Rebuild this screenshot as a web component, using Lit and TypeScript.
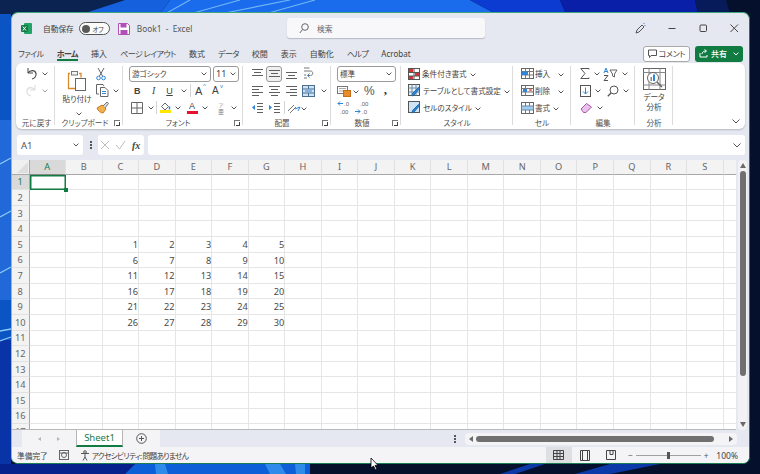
import { LitElement, html, css, svg } from "lit";
import { customElement } from "lit/decorators.js";

const BLUE = "#2f86d6";
const GREY = "#5f5f5f";

// thin wrapper so every ribbon icon is drawn on the same kind of box
const ico = (w: number, h: number, body: unknown) => html`<svg class="ico" width=${w} height=${h} viewBox="0 0 ${w} ${h}" fill="none" stroke=${GREY} stroke-width="1">${body}</svg>`;

const lines = (rows: [number, number, number][], color = GREY) =>
  rows.map(([x1, x2, y]) => svg`<path d="M${x1} ${y + 0.5}H${x2}" stroke=${color}/>`);

const caret = html`<svg class="caret" width="6" height="4" viewBox="0 0 6 4" fill="none" stroke="#555"><path d="M.6.6 3 3l2.4-2.4"/></svg>`;

const icons = {
  undo: ico(13, 13, svg`<path d="M3 1v5h5" stroke="#444"/><path d="M3 6c2-3 7-3.5 8 .5.6 2.6-1.4 5-4 5.5" stroke="#444" stroke-width="1.1"/>`),
  redo: ico(13, 13, svg`<path d="M10 1v5H5" stroke="#bdbdbd"/><path d="M10 6C8 3 3 2.5 2 6.5 1.4 9.100 3.4 11.5 6 12" stroke="#bdbdbd" stroke-width="1.1"/>`),
  paste: ico(20, 23, svg`<path d="M3 4.5H1.5v15H8M12 4.5h2v4" stroke="#d98a2b" stroke-width="1.3"/><rect x="4.5" y="2.5" width="6" height="3.5" fill="#f4f4f4" stroke="#777"/><rect x="8.5" y="9.5" width="10" height="12" fill="#fff" stroke="#666"/>`),
  cut: ico(10, 14, svg`<path d="M2 1l4.5 8M8 1 3.5 9" stroke="#666"/><circle cx="2.5" cy="11" r="1.8" stroke=${BLUE}/><circle cx="7.5" cy="11" r="1.8" stroke=${BLUE}/>`),
  copy: ico(13, 13, svg`<path d="M3 10H.5V.5H7L8 2" stroke="#666"/><path d="M4.5 3.5H9l3 3v6H4.5z" fill="#fff" stroke="#666"/><path d="M6 7.5h4M6 9.5h4" stroke=${BLUE}/>`),
  painter: ico(13, 13, svg`<path d="M1 7l5-3 4 4-3 4c-2 0-5-2-6-5z" fill="#f4b04e" stroke="#c77a1c"/><path d="M7 5l4-4 1.5 1.5L9 7" fill="#d9d9d9" stroke="#777"/>`),
  borders: ico(12, 12, svg`<path d="M.5.5h11v11H.5zM6 .5v11M.5 6h11" stroke="#666"/>`),
  fill: html`<span class="colored"><svg width="11" height="8" viewBox="0 0 11 8" fill="none"><path d="M1.5 4.5 5 1l3.5 3.5L5 8z" stroke="#666"/><path d="M9.5 4.5v3" stroke=${BLUE} stroke-width="1.5"/></svg><i style="background:#ffe600"></i></span>`,
  ruby: html`<span class="ruby"><small>ア</small><b>亜</b></span>`,
  wrap: ico(12, 13, svg`<path d="M2 1h5.5M2 4h6.5c3 0 3 4.5 0 4.5H6" stroke="#777"/><path d="M7.5 6.5 5.5 8.5l2 2" stroke=${BLUE}/><path d="M2 8h2M2 11h3" stroke="#777"/>`),
  merge: ico(13, 12, svg`<rect x=".5" y=".5" width="12" height="11" fill="#cfe3f6" stroke="#4a6f8f"/><path d="M.5 4h12M.5 8h12M6.5 .5V4M6.5 8v3.5" stroke="#4a6f8f"/><path d="M3 6h7" stroke=${BLUE}/>`),
  orient: ico(14, 12, svg`<path d="M1 9l6-6M3 11l6-6" stroke="#777"/><path d="M8 7l5-2-2 4" stroke=${BLUE}/>`),
  currency: html`<svg class="ico" width="14" height="12" viewBox="0 0 14 12" fill="none"><rect x=".5" y="1.5" width="10" height="7" stroke="#777"/><path d="M2 3.500h7M2 6h7" stroke="#aaa"/><rect x="6.5" y="5.500" width="7" height="6" fill="#e98b2a" stroke="#c46f16"/></svg>`,
  incDec: html`<svg class="ico" width="16" height="15" viewBox="0 0 16 15" fill="none"><path d="M6 3.500H1M3 1.500l-2 2 2 2" stroke=${BLUE}/><text x="7" y="6" class="dec">.0</text><text x="3" y="14" class="dec">.00</text></svg>`,
  decDec: html`<svg class="ico" width="16" height="15" viewBox="0 0 16 15" fill="none"><text x="6" y="6" class="dec">.00</text><path d="M1 11.500h5M4 9.500l2 2-2 2" stroke=${BLUE}/><text x="8" y="14" class="dec">.0</text></svg>`,
  condFmt: ico(12, 12, svg`<rect x=".5" y=".5" width="11" height="11" fill="#fff" stroke="#555"/><path d="M1 1h4v3H1z" fill="#d13438" stroke="none"/><path d="M7 5h4v3H7z" fill="#d13438" stroke="none"/><path d="M1 8h4v3H1z" fill="#d13438" stroke="none"/><path d="M.5 4.5h11M.5 8h11M6 .5v11" stroke="#555"/>`),
  tableFmt: ico(13, 13, svg`<rect x=".5" y=".5" width="11" height="11" fill="#e7f0f9" stroke="#555"/><path d="M.5 4h11M.5 8h11M4 .5v11M8 .5v11" stroke="#6f8aa3"/><path d="M12 4 6 11l-2 1 .5-2.5 6-6z" fill=${BLUE} stroke="#1f6cb0"/>`),
  cellStyle: ico(13, 13, svg`<rect x=".5" y=".5" width="11" height="11" fill="#cfe3f6" stroke="#555"/><path d="M12 4 6 11l-2 1 .5-2.5 6-6z" fill=${BLUE} stroke="#1f6cb0"/>`),
  insert: ico(13, 11, svg`<rect x=".5" y=".5" width="12" height="10" stroke="#666"/><path d="M.5 3.5h12M.5 7h12M4.5 .5v10M8.5 .5v10" stroke="#777"/><path d="M1 3.5h6V7H1z" fill=${BLUE} stroke="none"/>`),
  del: ico(13, 11, svg`<rect x=".5" y=".5" width="12" height="10" stroke="#666"/><path d="M.5 3.5h12M.5 7h12M4.5 .5v10" stroke="#777"/><path d="M2 4h4v3H2z" fill=${BLUE} stroke="none"/><path d="M8 3.5l3 3M11 3.5l-3 3" stroke="#d13438"/>`),
  format: ico(13, 12, svg`<rect x=".5" y=".5" width="12" height="11" stroke="#666"/><path d="M4.5 .5v11M8.5 .5v11" stroke="#777"/><path d="M.5 4h12v4H.5z" fill="#a6cdee" stroke="#5f87a8"/>`),
  sigma: ico(10, 11, svg`<path d="M9 1.5V.5H.8L5 5.500.8 10.5H9V9.5" stroke="#555"/>`),
  sort: ico(15, 14, svg`<path d="M1 6 3 1l2 5M1.8 4.5h2.4" stroke=${BLUE}/><path d="M1 8.5h4l-4 5h4" stroke="#555"/><path d="M7 3h7L11.5 7v3L9.500 9V7z" stroke="#666"/>`),
  fillDown: ico(11, 12, svg`<rect x=".5" y=".5" width="10" height="11" stroke="#555"/><path d="M5.5 2.5v6M3 6.5l2.5 2.5L8 6.5" stroke=${BLUE}/>`),
  find: ico(12, 12, svg`<circle cx="7" cy="5" r="4" stroke="#555"/><path d="M4 8 .8 11.3" stroke="#555" stroke-width="1.3"/>`),
  clear: ico(13, 12, svg`<path d="M1 7l5.500-5.500L11.500 5 6 10.500H3.500z" fill="#e7c3e8" stroke="#b14fb5"/>`),
  analyze: html`<svg width="23" height="22" viewBox="0 0 23 22" fill="none" stroke="#666"><rect x=".5" y=".5" width="22" height="21"/><path d="M.5 4.5h22M.5 17h22M6 .5v21M17 .5v21" stroke="#888"/><circle cx="10" cy="10" r="5.500" fill="#fff"/><path d="M7.500 9H9v4H7.500z" fill="#888" stroke="none"/><path d="M10 6.500h2V13h-2z" fill=${BLUE} stroke="none"/><path d="M14 14l5 5" stroke-width="1.5"/></svg>`,
};

@customElement("app-root")
export class AppRoot extends LitElement {
  static styles = css`
    :host { display: block; width: 760px; height: 474px; overflow: hidden; position: relative; font-family: "Noto Sans CJK JP", "Noto Sans", sans-serif; font-feature-settings: "palt"; color: #424242; font-size: 7.7px; background: #06122e; padding: 12px 10px 10px 11px; box-sizing: border-box; }
    .wall { position: absolute; inset: 0; }
    .win { position: relative; width: 739px; height: 452px; background: #e5e8f0; border-top: 1px solid #3fa57b; border-right: 1px solid #1a7d54; border-bottom: 1px solid #1a7d54; border-left: 1px solid #7fc6a5; border-radius: 7px; box-sizing: border-box; display: flex; flex-direction: column; overflow: hidden; }

    .title { height: 31px; display: flex; align-items: center; padding-left: 9px; flex: none; position: relative; }
    .logo { width: 11px; height: 11px; margin-right: 11px; }
    .toggle { height: 11px; border: 1px solid #555; border-radius: 7px; margin: 0 8px 0 5px; display: flex; align-items: center; justify-content: space-between; padding: 0 5px 0 2px; box-sizing: content-box; background: #fbfbfb; width: 22px; font-size: 6.5px; }
    .toggle b { width: 8px; height: 8px; border-radius: 50%; background: #5a5a5a; }
    .save { margin-right: 7px; }
    .book { font-family: "Noto Sans", sans-serif; font-size: 8.3px; color: #555; }
    .search { position: absolute; left: 275px; top: 5px; width: 198px; height: 20px; background: #f8f8fa; border-radius: 3px; box-shadow: 0 1px 1px #b8bbc2; display: flex; align-items: center; gap: 8px; padding-left: 12px; box-sizing: border-box; color: #666; }
    .wincontrols { margin-left: auto; display: flex; align-items: center; gap: 20px; padding-right: 9px; }

    .tabs { height: 19px; display: flex; align-items: center; gap: 13px; padding-left: 6px; flex: none; position: relative; white-space: nowrap; font-size: 8px; }
    .tabs .kana { letter-spacing: -0.5px; }
    .tabs .on { font-weight: 700; position: relative; }
    .tabs .on::after { content: ""; position: absolute; left: 0; right: 0; bottom: -2px; height: 2px; background: #107c41; }
    .tabright { margin-left: auto; display: flex; gap: 5px; padding-right: 6px; }
    .comment { width: 47px; height: 16px; background: #fff; border: 1px solid #a9a9a9; border-radius: 3px; display: flex; align-items: center; justify-content: center; gap: 2px; box-sizing: border-box; letter-spacing: -0.3px; }
    .share { width: 48px; height: 16px; background: #107c41; color: #fff; border-radius: 3px; display: flex; align-items: center; padding: 0 4px; gap: 3px; box-sizing: border-box; font-weight: 500; }
    .share .caret { margin-left: auto; }
    .share .caret path { stroke: #fff; }

    .ribbon { margin: 0 4px; height: 66px; background: #fff; border-radius: 6px; box-shadow: 0 1px 2px #b4b7be; display: flex; flex: none; position: relative; font-size: 7.6px; }
    .grp { display: flex; flex-direction: column; align-items: stretch; position: relative; box-sizing: border-box; }
    .grp::after { content: ""; position: absolute; right: 0; top: 3px; bottom: 4px; width: 1px; background: #dcdcdc; }
    .body { height: 52px; margin-top: 2px; display: flex; flex: none; box-sizing: border-box; }
    .cap { height: 12px; line-height: 12px; text-align: center; position: relative; color: #505050; }
    .launch { position: absolute; right: 3px; top: 3px; width: 5px; height: 5px; border-left: 1px solid #777; border-top: 1px solid #777; }
    .launch::after { content: ""; position: absolute; right: 0; bottom: 0; width: 3px; height: 3px; border-right: 1px solid #444; border-bottom: 1px solid #444; }
    .col { display: flex; flex-direction: column; }
    .row { height: 17px; display: flex; align-items: center; white-space: nowrap; }
    .caret { flex: none; margin-left: 4px; }
    .ico { flex: none; display: block; }
    .dec { font: 6px "Liberation Sans", sans-serif; fill: #666; }
    .vsep { width: 1px; height: 13px; background: #d4d4d4; flex: none; }
    .slot { width: 16.5px; display: flex; justify-content: center; flex: none; align-items: center; }
    .big { display: flex; flex-direction: column; align-items: center; }
    .sel { border: 1px solid #9b9b9b; background: #fff; border-radius: 3px; height: 16px; display: flex; align-items: center; justify-content: space-between; box-sizing: border-box; padding: 0 3px 0 2px; flex: none; }
    .fmt { font-weight: 700; font-family: "Liberation Sans", sans-serif; font-size: 9px; color: #444; }
    .fmti { font-style: italic; font-family: "Liberation Serif", serif; font-size: 10px; }
    .fmtu { text-decoration: underline; font-family: "Liberation Sans", sans-serif; font-size: 9px; }
    .growA { font-family: "Liberation Sans", sans-serif; font-size: 11px; position: relative; }
    .growA sup { position: absolute; left: 8px; top: -2px; font-size: 6px; color: #2f86d6; }
    .colored { display: inline-flex; flex-direction: column; width: 11px; align-items: center; gap: 0; line-height: 8px; }
    .colored i { display: block; width: 11px; height: 3px; }
    .ruby { display: inline-flex; flex-direction: column; align-items: center; font-size: 6px; line-height: 7px; color: #888; }
    .ruby small { font-size: 5px; }
    .ruby b { font-weight: 400; }
    .palign { height: 16px; width: 16px; display: flex; align-items: center; justify-content: center; box-sizing: border-box; }
    .palign.on { background: #f0f0f0; border: 1px solid #9a9a9a; border-radius: 3px; }
    .pct { font-size: 12px; font-family: "Liberation Sans", sans-serif; color: #555; }
    .comma { font-size: 13px; font-family: "Liberation Serif", serif; font-weight: 700; color: #333; line-height: 9px; height: 12px; }

    .fbar { height: 20px; margin: 6px 4px 0 5px; display: flex; flex: none; align-items: stretch; }
    .namebox { width: 66px; background: #fff; border-radius: 3px; display: flex; align-items: center; justify-content: space-between; padding: 0 4px; box-sizing: border-box; font-family: "Noto Sans", sans-serif; font-size: 9.5px; color: #555; }
    .dots { width: 15px; display: flex; flex-direction: column; align-items: center; justify-content: center; gap: 1px; }
    .dots i { width: 2px; height: 2px; background: #555; display: block; }
    .fx { width: 46px; background: #fff; border-radius: 3px; display: flex; align-items: center; gap: 5px; padding: 0 3px 0 2px; box-sizing: border-box; margin-right: 4px; }
    .fx em { font-family: "Liberation Serif", serif; font-weight: 700; font-size: 10px; color: #444; margin-left: 1px; }
    .finput { flex: 1; background: #fff; border-radius: 3px; display: flex; align-items: center; justify-content: flex-end; padding-right: 4px; }

    .sheetwrap { flex: 1; margin-top: 5px; display: flex; min-height: 0; }
    .sheet { width: 724px; overflow: hidden; background: #fff; display: grid; grid-template-columns: 17.5px repeat(20, 36.54px); grid-auto-rows: 15.62px; grid-template-rows: 14.5px; align-content: start; font-family: "Noto Sans", sans-serif; font-size: 9.2px; color: #4a4a4a; border-bottom: 1px solid #b9b9b9; }
    .hd { background: #f3f3f3; display: flex; align-items: center; justify-content: center; color: #666; box-sizing: border-box; border-right: 1px solid #e1e1e1; border-bottom: 1px solid #a8a8a8; }
    .rh { background: #f3f3f3; display: flex; align-items: center; justify-content: center; color: #666; box-sizing: border-box; border-right: 1px solid #a8a8a8; border-bottom: 1px solid #e1e1e1; }
    .hd.on { background: #d9d9d9; color: #1b7a4c; border-bottom-color: #888; }
    .rh.on { background: #d9d9d9; color: #1b7a4c; }
    .corner { background: #f0f0f0; position: relative; border-right: 1px solid #a8a8a8; border-bottom: 1px solid #a8a8a8; box-sizing: border-box; }
    .corner::after { content: ""; position: absolute; right: 1px; bottom: 1px; border-left: 11px solid transparent; border-bottom: 11px solid #dedede; }
    .cell { border-right: 1px solid #e6e6e6; border-bottom: 1px solid #e6e6e6; box-sizing: border-box; text-align: right; padding-right: 0; line-height: 15px; position: relative; }
    .cur { box-shadow: inset 0 0 0 1.5px #107c41; border: 0; }
    .cur::after { content: ""; position: absolute; right: -2px; bottom: -2px; width: 4px; height: 4px; background: #107c41; border: 0; z-index: 1; }
    .vs { flex: 1; background: #f2f2f4; display: flex; flex-direction: column; align-items: center; padding-top: 3px; border-radius: 4px; margin: 0 2px; }
    .thumb { width: 6px; height: 205px; background: #6f6f6f; border-radius: 3px; margin-top: 3px; }
    .arrow-up { border: 3.5px solid transparent; border-top: 0; border-bottom: 5px solid #6a6a6a; }
    .arrow-down { border: 3.5px solid transparent; border-bottom: 0; border-top: 5px solid #6a6a6a; margin-top: auto; margin-bottom: 3px; }

    .tabstrip { height: 17px; display: flex; align-items: stretch; flex: none; position: relative; }
    .nav { width: 54px; margin-left: 10px; background: #f4f4f6; display: flex; align-items: center; justify-content: space-around; padding: 0 8px; box-sizing: border-box; }
    .nav i { border: 2.5px solid transparent; border-right: 3px solid #b5b5b5; border-left: 0; }
    .nav i.r { border-right: 0; border-left: 3px solid #b5b5b5; }
    .sheettab { width: 47px; background: #fff; text-align: center; color: #1b7a4c; font-family: "Noto Sans", sans-serif; font-size: 9.5px; line-height: 15px; border-left: 1px solid #b5b5b5; border-right: 1px solid #b5b5b5; border-bottom: 2px solid #107c41; box-sizing: border-box; }
    .addbtn { width: 37px; background: #f4f4f6; display: flex; align-items: center; justify-content: center; }
    .hscroll { margin-left: auto; display: flex; align-items: center; }
    .hdots { width: 20px; display: flex; flex-direction: column; align-items: center; gap: 1px; }
    .hdots i { width: 2px; height: 2px; background: #555; display: block; }
    .htrack { width: 272px; height: 12px; background: #f4f4f6; border-radius: 4px; display: flex; align-items: center; padding: 0 4px; box-sizing: border-box; margin-right: 12px; gap: 3px; }
    .htrack i { border: 3.5px solid transparent; border-right: 4px solid #6a6a6a; border-left: 0; }
    .htrack i.r { border-right: 0; border-left: 4px solid #6a6a6a; margin-left: auto; }
    .hthumb { width: 238px; height: 6px; background: #707070; border-radius: 3px; }

    .status { height: 16px; display: flex; align-items: center; flex: none; padding-left: 5px; background: #f4f4f6; }
    .status .a11y { letter-spacing: -0.7px; }
    .status .right { margin-left: auto; display: flex; align-items: stretch; height: 100%; }
    .view { width: 26px; display: flex; align-items: center; justify-content: center; }
    .view.on { background: #dedfe3; }
    .zoom { display: flex; align-items: center; margin-left: 4px; gap: 3px; color: #555; font-size: 8.5px; }
    .track { width: 65px; height: 1px; background: #a0a0a0; position: relative; }
    .track b { position: absolute; left: 31px; top: -3px; width: 3px; height: 7px; background: #555; }
    .pctz { font-family: "Noto Sans", sans-serif; font-size: 8.5px; margin: 0 11px 0 8px; align-self: center; }
    .cursor { position: absolute; left: 370px; top: 457px; }
  `;

  private renderGrid() {
    const cols = "ABCDEFGHIJKLMNOPQRST".split("");
    const cells = [];
    cells.push(html`<div class="corner"></div>`);
    cols.forEach((c, i) => cells.push(html`<div class="hd ${i == 0 ? "on" : ""}">${c == "T" ? "" : c}</div>`));
    for (let r = 1; r <= 17; r++) {
      cells.push(html`<div class="rh ${r == 1 ? "on" : ""}">${r}</div>`);
      cols.forEach((_, c) => {
        // the numbers 1..30 fill C5:G10
        const has = r >= 5 && r <= 10 && c >= 2 && c <= 6;
        const v = has ? (r - 5) * 5 + (c - 2) + 1 : "";
        cells.push(html`<div class="cell ${r == 1 && c == 0 ? "cur" : ""}">${v}</div>`);
      });
    }
    return cells;
  }

  private alignIcon(kind: "t" | "m" | "b" | "l" | "c" | "r") {
    const rows: Record<string, [number, number, number][]> = {
      t: [[1, 12, 1], [3, 10, 4], [1, 12, 7]],
      m: [[1, 12, 2], [3, 10, 5], [1, 12, 8]],
      b: [[1, 12, 4], [3, 10, 7], [1, 12, 10]],
      l: [[1, 12, 1], [1, 8, 4], [1, 12, 7], [1, 8, 10]],
      c: [[1, 12, 1], [3, 10, 4], [1, 12, 7], [3, 10, 10]],
      r: [[1, 12, 1], [5, 12, 4], [1, 12, 7], [5, 12, 10]],
    };
    return ico(13, 11, lines(rows[kind]));
  }

  private indentIcon(out: boolean) {
    return ico(13, 11, svg`${lines([[6, 12, 1], [6, 12, 4], [6, 12, 7], [6, 12, 10]])}<path d=${out ? "M4 3 1 5.5 4 8z" : "M1 3l3 2.5L1 8z"} fill=${BLUE} stroke="none"/>`);
  }

  private renderRibbon() {
    return html`
      <div class="ribbon">
        <div class="grp" style="width:39px">
          <div class="body col" style="padding:0 0 0 9px">
            <div class="row">${icons.undo}${caret}</div>
            <div class="row" style="opacity:.55">${icons.redo}${caret}</div>
          </div>
          <div class="cap" style="padding-left:2px">元に戻す</div>
        </div>

        <div class="grp" style="width:68px">
          <div class="body" style="padding-left:7px">
            <div class="big" style="width:30px">
              <div style="height:4px;flex:none"></div>
              ${icons.paste}
              <div style="line-height:11px;margin-top:1px;white-space:nowrap">貼り付け</div>
              <div style="margin-top:3px">${caret}</div>
            </div>
            <div class="col" style="margin-left:4px">
              <div class="row">${icons.cut}</div>
              <div class="row">${icons.copy}${caret}</div>
              <div class="row">${icons.painter}</div>
            </div>
          </div>
          <div class="cap" style="padding-right:8px">クリップボード<span class="launch"></span></div>
        </div>

        <div class="grp" style="width:120px">
          <div class="body col" style="padding-left:6px">
            <div class="row" style="gap:2px">
              <div class="sel" style="width:82px"><span>游ゴシック</span>${caret}</div>
              <div class="sel" style="width:26px"><span style="font-family:'Noto Sans';font-size:9px">11</span>${caret}</div>
            </div>
            <div class="row">
              <div class="slot"><span class="fmt">B</span></div>
              <div class="slot"><span class="fmti">I</span></div>
              <div class="slot" style="width:15px"><span class="fmtu">U</span></div>${caret}
              <div class="vsep" style="margin:0 4px 0 3px"></div>
              <span class="growA" style="width:17px">A<sup>^</sup></span>
              <span class="growA" style="font-size:10px">A<sup>v</sup></span>
            </div>
            <div class="row">
              <div class="slot" style="width:15px">${icons.borders}</div>${caret}
              <div class="vsep" style="margin:0 2px"></div>
              <div class="slot" style="width:12px">${icons.fill}</div>${caret}
              <div class="slot" style="width:12px;margin-left:5px"><span class="colored"><span style="font-family:'Liberation Sans';font-size:9px;line-height:9px">A</span><i style="background:#e8112d"></i></span></div>${caret}
              <div class="slot" style="width:12px;margin-left:7px">${icons.ruby}</div>${caret}
            </div>
          </div>
          <div class="cap" style="padding-right:10px">フォント<span class="launch"></span></div>
        </div>

        <div class="grp" style="width:88px">
          <div class="body col" style="padding-left:6px">
            <div class="row" style="gap:1px">
              <div class="palign">${this.alignIcon("t")}</div>
              <div class="palign on">${this.alignIcon("m")}</div>
              <div class="palign">${this.alignIcon("b")}</div>
              <div class="palign">${icons.wrap}</div>
            </div>
            <div class="row" style="gap:1px">
              <div class="palign">${this.alignIcon("l")}</div>
              <div class="palign">${this.alignIcon("c")}</div>
              <div class="palign">${this.alignIcon("r")}</div>
              <div class="palign">${icons.merge}</div>${caret}
            </div>
            <div class="row" style="gap:1px">
              <div class="palign">${this.indentIcon(true)}</div>
              <div class="palign">${this.indentIcon(false)}</div>
              <div class="vsep" style="margin:0 1px"></div>
              ${icons.orient}<span style="margin-left:-5px">${caret}</span>
            </div>
          </div>
          <div class="cap" style="padding-right:10px">配置<span class="launch"></span></div>
        </div>

        <div class="grp" style="width:70px">
          <div class="body col" style="padding-left:6px">
            <div class="row"><div class="sel" style="width:59px"><span>標準</span>${caret}</div></div>
            <div class="row">
              ${icons.currency}<span style="margin-left:-2px">${caret}</span>
              <span class="pct" style="margin-left:5px">%</span>
              <span class="comma" style="margin-left:9px">,</span>
            </div>
            <div class="row" style="gap:1px">${icons.incDec}${icons.decDec}</div>
          </div>
          <div class="cap" style="padding-right:8px">数値<span class="launch"></span></div>
        </div>

        <div class="grp" style="width:112px">
          <div class="body col" style="padding-left:7px">
            <div class="row" style="gap:2px">${icons.condFmt}条件付き書式<span style="margin-left:-3px">${caret}</span></div>
            <div class="row" style="gap:2px">${icons.tableFmt}テーブルとして書式設定<span style="margin-left:-3px">${caret}</span></div>
            <div class="row" style="gap:2px">${icons.cellStyle}セルのスタイル<span style="margin-left:-3px">${caret}</span></div>
          </div>
          <div class="cap">スタイル</div>
        </div>

        <div class="grp" style="width:58px">
          <div class="body col" style="padding-left:8px">
            <div class="row"><span style="margin-right:1px">${icons.insert}</span>挿入<span style="margin-left:4px">${caret}</span></div>
            <div class="row"><span style="margin-right:1px">${icons.del}</span>削除<span style="margin-left:4px">${caret}</span></div>
            <div class="row"><span style="margin-right:1px">${icons.format}</span>書式<span style="margin-left:-1px">${caret}</span></div>
          </div>
          <div class="cap">セル</div>
        </div>

        <div class="grp" style="width:64px">
          <div class="body" style="padding-left:9px">
            <div class="col" style="width:23px">
              <div class="row">${icons.sigma}${caret}</div>
              <div class="row">${icons.fillDown}${caret}</div>
              <div class="row">${icons.clear}${caret}</div>
            </div>
            <div class="col">
              <div class="row">${icons.sort}${caret}</div>
              <div class="row" style="padding-left:4px">${icons.find}${caret}</div>
            </div>
          </div>
          <div class="cap">編集</div>
        </div>

        <div class="grp" style="width:38px">
          <div class="body big" style="padding-top:3px">
            ${icons.analyze}
            <div style="line-height:9.5px;margin-top:2px;text-align:center">データ<br />分析</div>
          </div>
          <div class="cap">分析</div>
        </div>

        <svg style="position:absolute;right:5px;bottom:5px" width="8" height="5" viewBox="0 0 8 5" fill="none" stroke="#555"><path d="M.5.5 4 4 7.5.5"/></svg>
      </div>
    `;
  }

  private renderWallpaper() {
    return html`
      <svg class="wall" viewBox="0 0 760 474" preserveAspectRatio="none">
        <rect width="760" height="474" fill="#04102c" />
        <!-- top edge -->
        <path d="M0 0H125L82 14H0z" fill="#0b2350" />
        <path d="M125 0H170L160 14H82z" fill="#1560dc" />
        <path d="M170 0H470L496 14H160z" fill="#1a6cec" />
        <path d="M470 0H560L566 14H496z" fill="#0b3bd0" />
        <path d="M560 0H695L698 14H566z" fill="#0a1fa8" />
        <path d="M695 0H726L730 14H698z" fill="#071a5a" />
        <path d="M190 0 165 14M240 0 190 14M290 0 220 14M315 0 265 14" stroke="#6fb4f4" stroke-width="1.2" />
        <!-- left edge -->
        <path d="M0 14H11V474H0z" fill="#0b54c4" />
        <path d="M0 120H11V300H0z" fill="#2168d8" />
        <path d="M0 340H11V474H0z" fill="#0834a8" />
        <path d="M0 164 11 158M0 217 11 211M0 273 11 267M0 331 11 329M0 341 11 337" stroke="#8ccaf5" stroke-width="1.3" />
        <!-- bottom edge -->
        <path d="M0 464H135L125 474H0z" fill="#06208c" />
        <path d="M135 464H310V474H125z" fill="#0d5fd8" />
        <path d="M155 464H165L168 474H156zM265 464H280L286 474H270zM295 464H305V474H296z" fill="#2f8bea" />
        <path d="M500 474 530 464H545L515 474zM575 474 610 464H660L610 474z" fill="#0b3aa8" />
      </svg>
    `;
  }

  render() {
    return html`
      ${this.renderWallpaper()}
      <div class="win">
        <div class="title">
          <svg class="logo" viewBox="0 0 11 11"><rect x="3" y="0" width="8" height="11" rx="1" fill="#21a366" /><rect x="0" y="2" width="7" height="7" rx="1" fill="#107c41" /><path d="M1.8 3.5 5 7.5M5 3.5 1.8 7.5" stroke="#fff" stroke-width="1" /></svg>
          <span>自動保存</span>
          <div class="toggle"><b></b>オフ</div>
          <svg class="save" width="12" height="12" viewBox="0 0 12 12"><path d="M.5.5h9l2 2v9H.5z" fill="#fff" stroke="#b14fb5" /><rect x="2.5" y="1" width="6" height="3.5" fill="#b14fb5" /><rect x="2.5" y="7" width="7" height="4.5" fill="#b14fb5" /></svg>
          <span class="book">Book1&nbsp;&nbsp;-&nbsp;&nbsp;Excel</span>
          <div class="search">
            <svg width="10" height="11" viewBox="0 0 10 11" fill="none" stroke="#666"><circle cx="6" cy="4" r="3.3" /><path d="M3.5 6.5.8 10" /></svg>
            <span>検索</span>
          </div>
          <div class="wincontrols">
            <svg width="11" height="11" viewBox="0 0 11 11" fill="none" stroke="#555"><path d="M1 10 2 7l5-5 2 2-5 5z" /><path d="M8.5.5h1M10 2v1" stroke="#2f86d6" /></svg>
            <svg style="margin-left:1px" width="11" height="11" viewBox="0 0 11 11" fill="none" stroke="#444"><path d="M1.5 5.5h7" /></svg>
            <svg width="11" height="11" viewBox="0 0 11 11" fill="none" stroke="#444"><rect x="2" y="2" width="6.5" height="6.5" rx="1" /></svg>
            <svg width="11" height="11" viewBox="0 0 11 11" fill="none" stroke="#444"><path d="M1.5 1.5 9 9M9 1.5 1.5 9" /></svg>
          </div>
        </div>

        <div class="tabs">
          <span class="kana">ファイル</span><span class="on kana">ホーム</span><span>挿入</span><span class="kana">ページ レイアウト</span><span>数式</span><span class="kana">データ</span><span>校閲</span><span>表示</span><span>自動化</span><span class="kana">ヘルプ</span><span style="font-family:'Noto Sans'">Acrobat</span>
          <div class="tabright">
            <div class="comment"><svg width="9" height="9" viewBox="0 0 9 9" fill="none" stroke="#555"><path d="M.5 1h8v5.500H3L1.500 8.500v-2h-1z" /></svg>コメント</div>
            <div class="share"><svg width="9" height="9" viewBox="0 0 9 9" fill="none" stroke="#fff"><path d="M1 4v4h7V6M3 5c0-2 2-3 4-3M5.500.5 7.500 2 5.500 3.500" /></svg>共有${caret}</div>
          </div>
        </div>

        ${this.renderRibbon()}

        <div class="fbar">
          <div class="namebox">A1${caret}</div>
          <div class="dots"><i></i><i></i><i></i></div>
          <div class="fx">
            <svg width="10" height="10" viewBox="0 0 10 10" fill="none" stroke="#bdbdbd"><path d="M1 1l8 8M9 1 1 9" /></svg>
            <svg width="11" height="10" viewBox="0 0 11 10" fill="none" stroke="#bdbdbd"><path d="M1 5l3.5 4L10 1" /></svg>
            <em>fx</em>
          </div>
          <div class="finput"><svg width="8" height="5" viewBox="0 0 8 5" fill="none" stroke="#555"><path d="M.5.5 4 4 7.5.5" /></svg></div>
        </div>

        <div class="sheetwrap">
          <div class="sheet">${this.renderGrid()}</div>
          <div class="vs"><span class="arrow-up"></span><div class="thumb"></div><span class="arrow-down"></span></div>
        </div>

        <div class="tabstrip">
          <div class="nav"><i></i><i class="r"></i></div>
          <div class="sheettab">Sheet1</div>
          <div class="addbtn"><svg width="11" height="11" viewBox="0 0 11 11" fill="none" stroke="#555"><circle cx="5.5" cy="5.5" r="4.8" /><path d="M3 5.500h5M5.500 3v5" /></svg></div>
          <div class="hscroll">
            <div class="hdots"><i></i><i></i><i></i></div>
            <div class="htrack"><i></i><div class="hthumb"></div><i class="r"></i></div>
          </div>
        </div>

        <div class="status">
          <span>準備完了</span>
          <svg style="margin:0 11px 0 11px" width="10" height="10" viewBox="0 0 10 10" fill="none" stroke="#666"><rect x=".5" y=".5" width="9" height="9" /><circle cx="5" cy="5" r="2.5" /><path d="M.5 3h9" /></svg>
          <svg style="margin-right:1px" width="11" height="11" viewBox="0 0 11 11" fill="none" stroke="#555"><circle cx="5" cy="2" r="1.3" /><path d="M1 3.500h8M5 3.500V7L3 10.500M5 7l2 3.500" /></svg>
          <span class="a11y">アクセシビリティ: 問題ありません</span>
          <div class="right">
            <div class="view on"><svg width="11" height="10" viewBox="0 0 11 10" fill="none" stroke="#444"><path d="M.5.5h10v9H.5zM.5 3.500h10M.5 6.500h10M4 .5v9M7 .5v9" /></svg></div>
            <div class="view"><svg width="10" height="11" viewBox="0 0 10 11" fill="none" stroke="#444"><path d="M.5.5h9v10H.5zM2.500 1v9M7.500 1v9" /></svg></div>
            <div class="view"><svg width="10" height="10" viewBox="0 0 10 10" fill="none" stroke="#444"><path d="M.5.5h9v9H.5zM4 .5v4h3V.5" /></svg></div>
            <div class="zoom"><span>−</span><div class="track"><b></b></div><span>+</span></div>
            <div class="pctz">100%</div>
          </div>
        </div>
      </div>
      <svg class="cursor" width="10" height="14" viewBox="0 0 10 14"><path d="M1 1v10l2.500-2 2 4 1.500-.8-2-3.800H8z" fill="#fff" stroke="#000" stroke-width=".8" /></svg>
    `;
  }
}
